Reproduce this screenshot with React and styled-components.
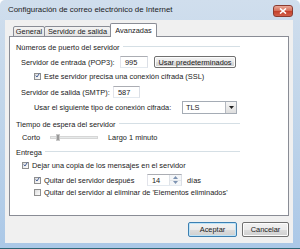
import React from "react";
import styled, { createGlobalStyle, css } from "styled-components";

const GlobalStyle = createGlobalStyle`
  html, body { margin: 0; padding: 0; background: #fff; }
  body { font-family: "Liberation Sans", Arial, sans-serif; color: #1a1a1a; }
`;

const Window = styled.div`
  width: 300px;
  height: 249px;
  box-sizing: border-box;
  display: flex;
  flex-direction: column;
  padding-bottom: 5px;
  border-radius: 5px 5px 0 0;
  border-bottom: 1px solid #2f6675;
  background: linear-gradient(180deg, #d0deed 0%, #c2d6ea 40%, #abc8e7 100%);
  overflow: hidden;
`;

const TitleBar = styled.div`
  height: 20px;
  flex: none;
  display: flex;
  align-items: flex-start;
  justify-content: space-between;
  padding: 0 7px 0 8px;
`;

const Title = styled.div`
  font-size: 7.9px;
  line-height: 20px;
  color: #1b1b1b;
`;

const CloseBtn = styled.div`
  margin-top: 5px;
  width: 20px;
  height: 12px;
  box-sizing: border-box;
  border: 1px solid #8a3b30;
  border-radius: 3px;
  background: linear-gradient(180deg, #e9a898 0%, #d7715c 45%, #c4412b 55%, #d2604a 100%);
  display: flex;
  align-items: center;
  justify-content: center;
`;

const Client = styled.div`
  flex: 1;
  margin: 0 7px 0 5px;
  padding: 4px 4px 0 4px;
  background: #f0f0f0;
  display: flex;
  flex-direction: column;
`;

const Tabs = styled.div`
  display: flex;
  align-items: flex-end;
  height: 13px;
  padding-left: 4px;
  margin-bottom: -1px;
  position: relative;
  z-index: 1;
`;

const Tab = styled.div`
  width: ${(p) => p.$w}px;
  height: ${(p) => (p.$active ? 14 : 11)}px;
  box-sizing: border-box;
  font-size: 7.4px;
  display: flex;
  align-items: center;
  justify-content: center;
  border: 1px solid #898c95;
  border-bottom: none;
  margin-right: -1px;
  border-radius: 2px 2px 0 0;
  white-space: nowrap;
  ${(p) =>
    p.$active
      ? css`
          background: #fff;
          padding-bottom: 1px;
        `
      : css`
          background: linear-gradient(180deg, #f3f3f3, #e5e5e5);
          border-bottom: 1px solid #898c95;
        `}
`;

const Panel = styled.div`
  height: 180px;
  box-sizing: border-box;
  border: 1px solid #898c95;
  background: #fff;
  padding: 5px 48px 0 0;
  display: flex;
  flex-direction: column;
`;

const GroupHeader = styled.div`
  height: 10px;
  margin-top: ${(p) => p.$mt || 0}px;
  padding-left: 6px;
  display: flex;
  align-items: center;
  font-size: 7.4px;
  white-space: nowrap;
  &::after {
    content: "";
    flex: 1;
    margin-left: 3px;
    border-top: 1px solid #d5dfe5;
    border-bottom: 1px solid #fff;
  }
`;

const Row = styled.div`
  height: ${(p) => p.$h || 14}px;
  margin-top: ${(p) => p.$mt || 0}px;
  padding-left: ${(p) => p.$indent || 0}px;
  display: flex;
  align-items: center;
  font-size: 7.4px;
  white-space: nowrap;
`;

const Label = styled.div`
  width: ${(p) => (p.$w ? `${p.$w}px` : "auto")};
  margin-left: ${(p) => p.$ml || 0}px;
  flex: none;
`;

const Field = styled.div`
  width: ${(p) => p.$w}px;
  height: 12px;
  box-sizing: border-box;
  border: 1px solid #abadb3;
  border-color: #abadb3 #dbdfe6 #e3e9ef #e2e3ea;
  background: #fff;
  padding-left: 4px;
  display: flex;
  align-items: center;
  font-size: 7.4px;
  flex: none;
`;

const Button = styled.div`
  width: ${(p) => p.$w}px;
  height: ${(p) => p.$h || 12}px;
  margin-left: ${(p) => p.$ml || 0}px;
  box-sizing: border-box;
  border: 1px solid ${(p) => (p.$default ? "#3c7fb1" : "#707070")};
  border-radius: 2px;
  background: linear-gradient(180deg, #f2f2f2 0%, #ebebeb 50%, #dddddd 51%, #cfcfcf 100%);
  box-shadow: inset 0 0 0 1px ${(p) => (p.$default ? "#bfe4f8" : "#fcfcfc")};
  display: flex;
  align-items: center;
  justify-content: center;
  font-size: 7.4px;
  white-space: nowrap;
  flex: none;
`;

const Box = styled.div`
  width: 7px;
  height: 7px;
  box-sizing: border-box;
  border: 1px solid #8f8f8f;
  background: linear-gradient(135deg, #dcdcdc, #fdfdfd);
  margin-right: 3px;
  display: flex;
  align-items: center;
  justify-content: center;
  flex: none;
`;

const Check = ({ checked }) => (
  <Box>
    {checked && (
      <svg width="7" height="7" viewBox="0 0 7 7" style={{ marginTop: -1 }}>
        <path d="M1 3.6 L2.8 5.6 L6 0.8" fill="none" stroke="#2a4a8c" strokeWidth="1.2" />
      </svg>
    )}
  </Box>
);

const Select = styled.div`
  width: 55px;
  height: 13px;
  box-sizing: border-box;
  border: 1px solid #a5acb5;
  background: #fff;
  display: flex;
  align-items: stretch;
  font-size: 7.4px;
  flex: none;
`;

const SelectText = styled.span`
  flex: 1;
  padding-left: 3px;
  display: flex;
  align-items: center;
`;

const DropBtn = styled.div`
  width: 10px;
  border-left: 1px solid #b5b9c0;
  background: linear-gradient(180deg, #f6f6f6, #dedede);
  display: flex;
  align-items: center;
  justify-content: center;
`;

const Spin = styled.div`
  width: 11px;
  align-self: stretch;
  margin-left: auto;
  display: flex;
  flex-direction: column;
  border-left: 1px solid #dfe3e8;
  background: #f4f6f8;
`;

const SpinHalf = styled.div`
  flex: 1;
  display: flex;
  align-items: center;
  justify-content: center;
  & + & { border-top: 1px solid #e2e6ea; }
`;

const Track = styled.div`
  width: 48px;
  height: 3px;
  margin-right: 10px;
  flex: none;
  box-sizing: border-box;
  border: 1px solid #d6d6d6;
  background: #e7eaea;
  display: flex;
  align-items: center;
  padding-left: 5px;
`;

const Thumb = styled.div`
  width: 2px;
  height: 5px;
  background: #9a9a9a;
  border: 1px solid #c9c9c9;
  flex: none;
`;

const Footer = styled.div`
  display: flex;
  justify-content: flex-end;
  gap: 5px;
  margin-top: 6px;
`;

const Arrow = ({ up, color }) => (
  <svg width="5" height="3" viewBox="0 0 5 3">
    <path d={up ? "M0 3 L2.5 0 L5 3 Z" : "M0 0 L5 0 L2.5 3 Z"} fill={color || "#222"} />
  </svg>
);

const App = () => {
  return (
    <>
      <GlobalStyle />
      <Window>
        <TitleBar>
          <Title>Configuración de correo electrónico de Internet</Title>
          <CloseBtn>
            <svg width="8" height="6" viewBox="0 0 8 6">
              <path d="M1 0.5 L7 5.5 M7 0.5 L1 5.5" stroke="#fff" strokeWidth="1.6" />
            </svg>
          </CloseBtn>
        </TitleBar>
        <Client>
          <Tabs>
            <Tab $w={32}>General</Tab>
            <Tab $w={67}>Servidor de salida</Tab>
            <Tab $w={47} $active>Avanzadas</Tab>
          </Tabs>
          <Panel>
            <GroupHeader>Números de puerto del servidor</GroupHeader>
            <Row $mt={3} $indent={11}>
              <Label $w={99}>Servidor de entrada (POP3):</Label>
              <Field $w={28}>995</Field>
              <Button $w={82} $ml={6}>Usar predeterminados</Button>
            </Row>
            <Row $indent={24}>
              <Check checked />
              <Label>Este servidor precisa una conexión cifrada (SSL)</Label>
            </Row>
            <Row $mt={2} $indent={11}>
              <Label $w={92}>Servidor de salida (SMTP):</Label>
              <Field $w={27}>587</Field>
            </Row>
            <Row $mt={1} $indent={24}>
              <Label $w={148}>Usar el siguiente tipo de conexión cifrada:</Label>
              <Select>
                <SelectText>TLS</SelectText>
                <DropBtn>
                  <Arrow />
                </DropBtn>
              </Select>
            </Row>
            <GroupHeader $mt={5}>Tiempo de espera del servidor</GroupHeader>
            <Row $mt={1} $indent={12}>
              <Label $w={28}>Corto</Label>
              <Track>
                <Thumb />
              </Track>
              <Label $w={21}>Largo</Label>
              <Label>1 minuto</Label>
            </Row>
            <GroupHeader $mt={3}>Entrega</GroupHeader>
            <Row $mt={1} $indent={12}>
              <Check checked />
              <Label>Dejar una copia de los mensajes en el servidor</Label>
            </Row>
            <Row $mt={1} $indent={24}>
              <Check checked />
              <Label $w={103}>Quitar del servidor después</Label>
              <Field $w={35}>
                14
                <Spin>
                  <SpinHalf>
                    <Arrow up color="#7d93b2" />
                  </SpinHalf>
                  <SpinHalf>
                    <Arrow color="#7d93b2" />
                  </SpinHalf>
                </Spin>
              </Field>
              <Label $ml={5}>días</Label>
            </Row>
            <Row $h={10} $indent={24}>
              <Check />
              <Label>Quitar del servidor al eliminar de 'Elementos eliminados'</Label>
            </Row>
          </Panel>
          <Footer>
            <Button $w={49} $h={15} $default>Aceptar</Button>
            <Button $w={47} $h={15}>Cancelar</Button>
          </Footer>
        </Client>
      </Window>
    </>
  );
};

export default App;
